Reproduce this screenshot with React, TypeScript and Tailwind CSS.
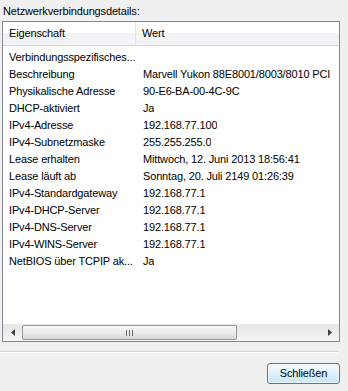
import React from "react";

const rows: [string, string][] = [
  ["Verbindungsspezifisches...", ""],
  ["Beschreibung", "Marvell Yukon 88E8001/8003/8010 PCI"],
  ["Physikalische Adresse", "90-E6-BA-00-4C-9C"],
  ["DHCP-aktiviert", "Ja"],
  ["IPv4-Adresse", "192.168.77.100"],
  ["IPv4-Subnetzmaske", "255.255.255.0"],
  ["Lease erhalten", "Mittwoch, 12. Juni 2013 18:56:41"],
  ["Lease läuft ab", "Sonntag, 20. Juli 2149 01:26:39"],
  ["IPv4-Standardgateway", "192.168.77.1"],
  ["IPv4-DHCP-Server", "192.168.77.1"],
  ["IPv4-DNS-Server", "192.168.77.1"],
  ["IPv4-WINS-Server", "192.168.77.1"],
  ["NetBIOS über TCPIP ak...", "Ja"],
];

export default function App() {
  return (
    <div
      className="w-[348px] h-[391px] bg-[#f0f0f0] text-black text-[11px] tracking-[-0.15px] overflow-hidden"
      style={{ fontFamily: '"Liberation Sans", Arial, sans-serif' }}
    >
      <div className="h-[21px] pl-[3px] pt-[5px] leading-[13px]">Netzwerkverbindungsdetails:</div>
      <div className="ml-[2px] w-[338px] h-[321px] border border-[#828790] bg-white flex flex-col">
        {/* header */}
        <div className="h-[24px] flex border-b border-[#d5d5d5] bg-gradient-to-b from-white from-50% to-[#f3f4f6] to-50% shrink-0">
          <div className="w-[133px] pl-[6px] flex items-center border-r border-[#e3e4e6]">Eigenschaft</div>
          <div className="flex-1 pl-[6px] flex items-center">Wert</div>
        </div>
        {/* rows */}
        <div className="flex-1 pt-[3px] overflow-hidden">
          {rows.map(([k, v]) => (
            <div key={k} className="h-[17px] flex items-center whitespace-nowrap">
              <div className="w-[134px] pl-[6px] shrink-0 overflow-hidden">{k}</div>
              <div className="pl-[6px] overflow-hidden">{v}</div>
            </div>
          ))}
        </div>
        {/* scrollbar */}
        <div className="h-[17px] flex items-stretch bg-gradient-to-b from-[#e6e6e6] to-[#f4f4f4] shrink-0">
          <div className="w-[19px] flex items-center justify-center">
            <svg width="4" height="7" viewBox="0 0 4 7">
              <path d="M4 0 L0 3.5 L4 7 Z" fill="#404040" />
            </svg>
          </div>
          <div className="w-[215px] my-[1px] rounded-[2px] border border-[#979797] bg-gradient-to-b from-[#f8f8f8] via-[#ececec] to-[#d8d8d8] flex items-center justify-center">
            <div className="flex gap-[2px]">
              <div className="w-[1px] h-[6px] bg-[#6a6a6a]" />
              <div className="w-[1px] h-[6px] bg-[#6a6a6a]" />
              <div className="w-[1px] h-[6px] bg-[#6a6a6a]" />
            </div>
          </div>
          <div className="flex-1" />
          <div className="w-[19px] flex items-center justify-center">
            <svg width="4" height="7" viewBox="0 0 4 7">
              <path d="M0 0 L4 3.5 L0 7 Z" fill="#404040" />
            </svg>
          </div>
        </div>
      </div>
      {/* separator */}
      <div className="mt-[9px] w-[338px] h-[1px] bg-[#d5d5d5]" />
      <div className="w-[338px] h-[1px] bg-white" />
      {/* button */}
      <div className="mt-[10px] flex justify-end pr-[8px]">
        <div className="w-[73px] h-[21px] rounded-[3px] border border-[#3c7fb1] bg-gradient-to-b from-[#f2f9fe] via-[#e0f2fd] to-[#c4e6fb] flex items-center justify-center shadow-[inset_0_0_0_1px_rgba(255,255,255,0.6)]">
          Schließen
        </div>
      </div>
    </div>
  );
}
